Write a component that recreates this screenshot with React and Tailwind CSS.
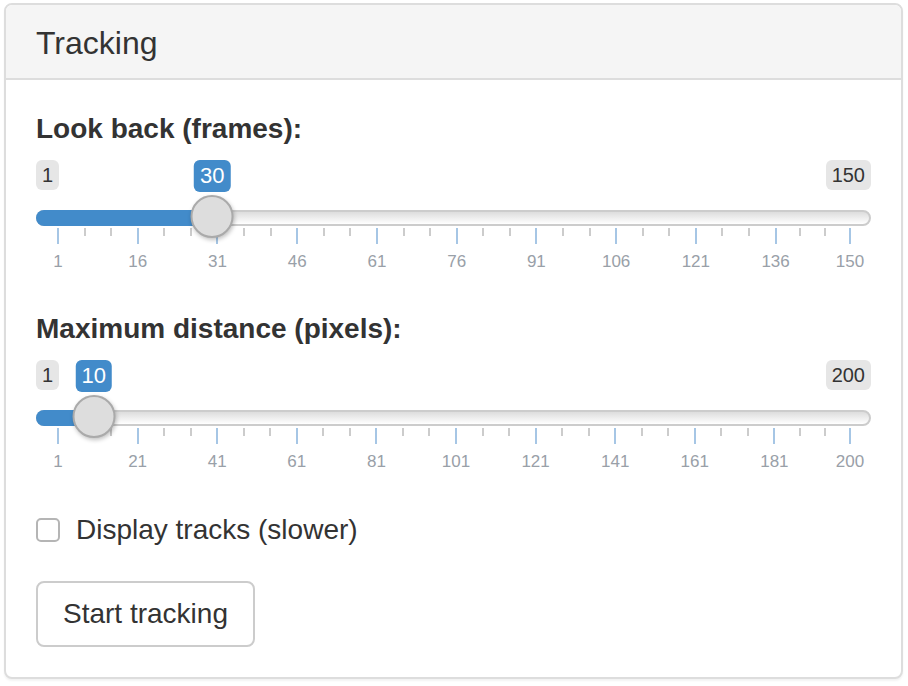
import React from "react";

const GRID_W = 792;

function Slider({ min, max, value, step }) {
  const pos = (v) => ((v - min) / (max - min)) * GRID_W;
  const majors = [];
  for (let v = min; v < max; v += step) majors.push(v);
  majors.push(max);
  const minors = [];
  for (let i = 0; i < majors.length - 1; i++) {
    const a = pos(majors[i]);
    const b = pos(majors[i + 1]);
    minors.push(a + (b - a) / 3, a + (2 * (b - a)) / 3);
  }
  const hp = 22 + pos(value);
  return (
    <div className="relative h-[120px]">
      <div className="flex justify-between">
        <span className="rounded-[6px] bg-[#e6e6e6] px-[6px] py-[2px] text-[20px] leading-[26px] text-[#333]">
          {min}
        </span>
        <span className="rounded-[6px] bg-[#e6e6e6] px-[6px] py-[2px] text-[20px] leading-[26px] text-[#333]">
          {max}
        </span>
      </div>
      <span
        className="absolute top-0 -translate-x-1/2 rounded-[6px] bg-[#428bca] px-[6px] py-[2px] text-[22px] leading-[28px] text-white"
        style={{ left: hp }}
      >
        {value}
      </span>
      <div className="relative mt-[20px] h-[16px]">
        <div className="absolute inset-0 rounded-full border-2 border-[#cccccc] bg-gradient-to-b from-[#dddddd] to-white" />
        <div
          className="absolute left-0 top-0 h-full rounded-l-full bg-[#428bca]"
          style={{ width: hp }}
        />
        <div
          className="absolute top-[-15px] h-[43px] w-[43px] -translate-x-1/2 rounded-full border-2 border-[#aaaaaa] bg-[#dddddd] shadow-[1px_2px_4px_rgba(0,0,0,0.25)] z-10"
          style={{ left: hp }}
        />
      </div>
      <div className="relative mx-[22px] mt-[2px] h-[52px]">
        {minors.map((x, i) => (
          <div
            key={"m" + i}
            className="absolute top-0 h-[8px] w-[2px] -translate-x-1/2 bg-[#cccccc]"
            style={{ left: x }}
          />
        ))}
        {majors.map((v) => (
          <div
            key={"M" + v}
            className="absolute top-0 h-[16px] w-[2px] -translate-x-1/2 bg-[#a6c6e5]"
            style={{ left: pos(v) }}
          />
        ))}
        {majors.map((v) => (
          <span
            key={"t" + v}
            className="absolute top-[24px] -translate-x-1/2 whitespace-nowrap text-[17px] leading-[20px] text-[#99a0a8]"
            style={{ left: pos(v) }}
          >
            {v}
          </span>
        ))}
      </div>
    </div>
  );
}

export default function App() {
  return (
    <div
      className="min-h-[686px] bg-white pl-[4px] pt-[3px] text-[#333]"
      style={{ fontFamily: '"Liberation Sans", Arial, sans-serif' }}
    >
      <div className="w-[899px] overflow-hidden rounded-[8px] border-2 border-[#dddddd] bg-white shadow-[0_2px_2px_rgba(0,0,0,0.05)]">
        <div className="border-b-2 border-[#dddddd] bg-[#f5f5f5] px-[30px] pb-[18px] pt-[22px]">
          <h3 className="text-[32px] leading-[33px] text-[#333]">Tracking</h3>
        </div>
        <div className="px-[30px] pb-[30px] pt-[29px]">
          <div className="mb-[11px] text-[28px] font-bold leading-[40px]">
            Look back (frames):
          </div>
          <Slider min={1} max={150} value={30} step={15} />
          <div className="mb-[11px] mt-[29px] text-[28px] font-bold leading-[40px]">
            Maximum distance (pixels):
          </div>
          <Slider min={1} max={200} value={10} step={20} />
          <label className="mt-[30px] flex items-center gap-[16px]">
            <span className="h-[24px] w-[24px] rounded-[5px] border-2 border-[#b5b5b5] bg-white" />
            <span className="text-[28px] leading-[40px]">Display tracks (slower)</span>
          </label>
          <button className="mt-[31px] rounded-[8px] border-2 border-[#cccccc] bg-white px-[25px] py-[12px] text-[28px] leading-[38px] text-[#333]">
            Start tracking
          </button>
        </div>
      </div>
    </div>
  );
}
